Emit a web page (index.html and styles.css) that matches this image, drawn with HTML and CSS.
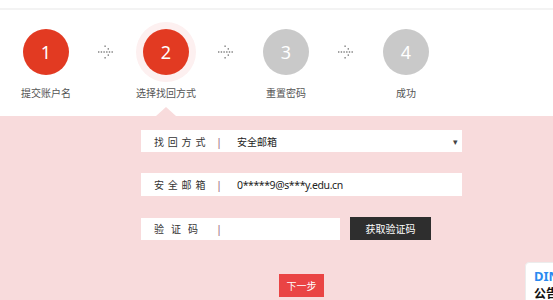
FILE: index.html
```html
<!DOCTYPE html>
<html lang="zh-CN">

<head>
    <meta charset="UTF-8" />
    <title>找回密码</title>
    <link rel="stylesheet" href="styles.css">
</head>

<body>
    <div class="top-line"></div>

    <!-- 步骤条 -->
    <div class="steps">
        <div class="step done">
            <div class="circle">1</div>
            <div class="step-name">提交账户名</div>
        </div>
        <div class="arrow">
            <svg viewBox="0 0 16 14" width="16" height="14">
                <rect x="0" y="6.3" width="1.4" height="1.4" />
                <rect x="2.7" y="6.3" width="1.4" height="1.4" />
                <rect x="5.4" y="6.3" width="1.4" height="1.4" />
                <rect x="8.1" y="6.3" width="1.4" height="1.4" />
                <rect x="10.8" y="6.3" width="1.4" height="1.4" />
                <rect x="13.5" y="6.3" width="1.4" height="1.4" />
                <rect x="6.4" y="0.5" width="1.4" height="1.4" />
                <rect x="9.6" y="3.2" width="1.4" height="1.4" />
                <rect x="9.6" y="9.4" width="1.4" height="1.4" />
                <rect x="6.4" y="12.1" width="1.4" height="1.4" />
            </svg>
        </div>
        <div class="step current">
            <div class="circle">2</div>
            <div class="step-name">选择找回方式</div>
        </div>
        <div class="arrow">
            <svg viewBox="0 0 16 14" width="16" height="14">
                <rect x="0" y="6.3" width="1.4" height="1.4" />
                <rect x="2.7" y="6.3" width="1.4" height="1.4" />
                <rect x="5.4" y="6.3" width="1.4" height="1.4" />
                <rect x="8.1" y="6.3" width="1.4" height="1.4" />
                <rect x="10.8" y="6.3" width="1.4" height="1.4" />
                <rect x="13.5" y="6.3" width="1.4" height="1.4" />
                <rect x="6.4" y="0.5" width="1.4" height="1.4" />
                <rect x="9.6" y="3.2" width="1.4" height="1.4" />
                <rect x="9.6" y="9.4" width="1.4" height="1.4" />
                <rect x="6.4" y="12.1" width="1.4" height="1.4" />
            </svg>
        </div>
        <div class="step">
            <div class="circle">3</div>
            <div class="step-name">重置密码</div>
        </div>
        <div class="arrow">
            <svg viewBox="0 0 16 14" width="16" height="14">
                <rect x="0" y="6.3" width="1.4" height="1.4" />
                <rect x="2.7" y="6.3" width="1.4" height="1.4" />
                <rect x="5.4" y="6.3" width="1.4" height="1.4" />
                <rect x="8.1" y="6.3" width="1.4" height="1.4" />
                <rect x="10.8" y="6.3" width="1.4" height="1.4" />
                <rect x="13.5" y="6.3" width="1.4" height="1.4" />
                <rect x="6.4" y="0.5" width="1.4" height="1.4" />
                <rect x="9.6" y="3.2" width="1.4" height="1.4" />
                <rect x="9.6" y="9.4" width="1.4" height="1.4" />
                <rect x="6.4" y="12.1" width="1.4" height="1.4" />
            </svg>
        </div>
        <div class="step">
            <div class="circle">4</div>
            <div class="step-name">成功</div>
        </div>
    </div>

    <!-- 表单区域 -->
    <div class="panel">
        <div class="form">
            <div class="row">
                <span class="label">找回方式</span>
                <span class="sep">|</span>
                <span class="value">安全邮箱</span>
                <span class="caret">▾</span>
            </div>
            <div class="row tall">
                <span class="label">安全邮箱</span>
                <span class="sep">|</span>
                <span class="value mail">0*****9@s***y.edu.cn</span>
            </div>
            <div class="code-line">
                <div class="row short">
                    <span class="label wide">验证码</span>
                    <span class="sep">|</span>
                </div>
                <button class="code-btn">获取验证码</button>
            </div>
            <button class="next-btn">下一步</button>
        </div>
    </div>

    <!-- 右下角公告 -->
    <div class="notice">
        <div class="notice-title">DINGTALK</div>
        <div class="notice-text">公告</div>
    </div>
</body>

</html>
```

FILE: styles.css
```css
html,
body {
    margin: 0;
    padding: 0;
    height: 100%;
    overflow: hidden;
    font-family: "Noto Sans", "Noto Sans CJK SC", sans-serif;
    background: #fff;
    color: #333;
}

.top-line {
    height: 8px;
    border-bottom: 2px solid #f3f3f3;
}

/* 步骤条 */
.steps {
    display: flex;
    align-items: flex-start;
    padding: 19px 0 0 6px;
    height: 106px;
    box-sizing: border-box;
}

.step {
    width: 80px;
    display: flex;
    flex-direction: column;
    align-items: center;
}

.circle {
    width: 46px;
    height: 46px;
    border-radius: 50%;
    background-color: #c9c9c9;
    color: #fff;
    font-size: 18px;
    line-height: 46px;
    text-align: center;
}

.step.done .circle,
.step.current .circle {
    background-color: #e23a22;
}

.step.current .circle {
    box-shadow: 0 0 0 7px #fdf0f0;
}

.step-name {
    margin-top: 10px;
    font-size: 10px;
    color: #555;
    white-space: nowrap;
}

.arrow {
    width: 40px;
    height: 46px;
    display: flex;
    justify-content: center;
    align-items: center;
}

.arrow svg {
    fill: #7a7a7a;
}

/* 表单 */
.panel {
    position: relative;
    background-color: #f8dbdc;
    height: 184px;
    padding: 14px 0 0 141px;
    box-sizing: border-box;
}

.panel::before {
    content: "";
    position: absolute;
    left: 156px;
    top: -9px;
    border-left: 10px solid transparent;
    border-right: 10px solid transparent;
    border-bottom: 9px solid #f8dbdc;
}

.form {
    width: 321px;
    display: flex;
    flex-direction: column;
    gap: 21px;
}

.row {
    display: flex;
    align-items: center;
    height: 22px;
    background: #fff;
    padding-left: 13px;
    font-size: 10px;
}

.row.tall {
    height: 23px;
}

.label {
    width: 62px;
    letter-spacing: 3.8px;
    color: #333;
}

.label.wide {
    letter-spacing: 7px;
}

.sep {
    color: #9c5a7a;
    font-size: 11px;
    margin-right: 15px;
}

.value {
    flex: 1;
    font-size: 10px;
    color: #222;
}

.value.mail {
    font-size: 10.5px;
    letter-spacing: -0.4px;
}

.caret {
    font-size: 9px;
    color: #444;
    margin-right: 4px;
}

.code-line {
    display: flex;
    align-items: center;
    gap: 10px;
}

.row.short {
    width: 199px;
    flex: none;
    box-sizing: border-box;
}

.code-btn {
    width: 81px;
    height: 23px;
    border: none;
    background-color: #2e2e2e;
    color: #fff;
    font-family: inherit;
    font-size: 10px;
    padding: 0;
}

.next-btn {
    align-self: flex-start;
    margin: 13px 0 0 138px;
    width: 45px;
    height: 23px;
    border: none;
    background-color: #ea4444;
    color: #fff;
    font-family: inherit;
    font-size: 10px;
    padding: 0;
}

/* 公告 */
.notice {
    position: fixed;
    left: 525px;
    top: 262px;
    width: 120px;
    height: 60px;
    background: #fff;
    border: 1px solid #ececec;
    border-radius: 4px;
    padding: 5px 0 0 8px;
    box-sizing: border-box;
    white-space: nowrap;
}

.notice-title {
    color: #2a8af0;
    font-weight: bold;
    font-size: 13px;
    line-height: 17px;
}

.notice-text {
    color: #111;
    font-weight: bold;
    font-size: 12px;
    line-height: 17px;
}
```
